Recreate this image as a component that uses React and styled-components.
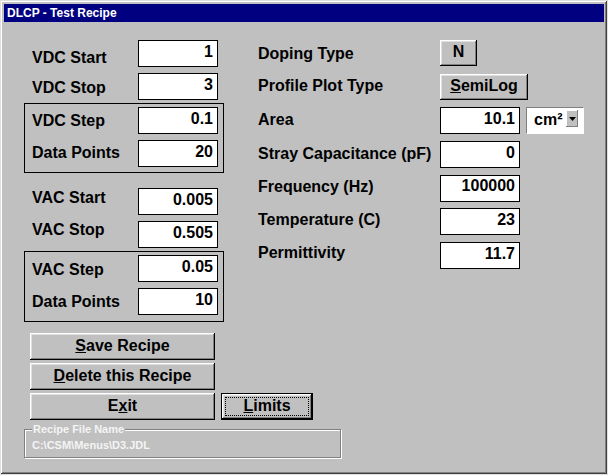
import React from "react";
import styled, { createGlobalStyle } from "styled-components";

const GlobalStyle = createGlobalStyle`
  html, body {
    margin: 0;
    padding: 0;
    background: #c0c0c0;
  }
  body {
    font-family: "Liberation Sans", Arial, sans-serif;
  }
`;

// left side values, dy = small nudge of the label against its box
const vdcTop = [
  { label: "VDC Start", value: "1", dy: 4, mt: 0 },
  { label: "VDC Stop", value: "3", dy: 1, mt: 6 },
];
const vdcGroup = [
  { label: "VDC Step", value: "0.1", dy: 0 },
  { label: "Data Points", value: "20", dy: -1 },
];
const vacTop = [
  { label: "VAC Start", value: "0.005", dy: -4, mt: 15 },
  { label: "VAC Stop", value: "0.505", dy: -5, mt: 6 },
];
const vacGroup = [
  { label: "VAC Step", value: "0.05", dy: 1 },
  { label: "Data Points", value: "10", dy: 0 },
];

const rightFields = [
  { label: "Stray Capacitance (pF)", value: "0", dy: -1 },
  { label: "Frequency (Hz)", value: "100000", dy: -1 },
  { label: "Temperature (C)", value: "23", dy: -2 },
  { label: "Permittivity", value: "11.7", dy: -3 },
];

const App = () => {
  return (
    <>
      <GlobalStyle />
      <Window>
        <TitleBar>DLCP - Test Recipe</TitleBar>
        <Body>
          <TopArea>
            <LeftCol>
              {vdcTop.map((f) => (
                <Field key={f.label} {...f} />
              ))}
              <Group $mt={3} $pb={5}>
                {vdcGroup.map((f) => (
                  <Field key={f.label} {...f} />
                ))}
              </Group>
              {vacTop.map((f) => (
                <Field key={f.label} {...f} />
              ))}
              <Group $mt={3} $pb={6}>
                {vacGroup.map((f) => (
                  <Field key={f.label} {...f} />
                ))}
              </Group>
            </LeftCol>

            <RightCol>
              <RightRow>
                <Label $w={182} $dy={0}>Doping Type</Label>
                <WinButton $w={37} $h={26}>N</WinButton>
              </RightRow>
              <RightRow>
                <Label $w={182} $dy={-1}>Profile Plot Type</Label>
                <WinButton $w={88} $h={26}>
                  <u>S</u>emiLog
                </WinButton>
              </RightRow>
              <RightRow>
                <Label $w={182} $dy={-1}>Area</Label>
                <NumBox readOnly value="10.1" />
                <UnitSelect>
                  <UnitText>cm²</UnitText>
                  <ArrowButton>
                    <svg width="7" height="4" viewBox="0 0 7 4">
                      <path d="M0 0h7L3.5 4z" fill="#000" />
                    </svg>
                  </ArrowButton>
                </UnitSelect>
              </RightRow>
              {rightFields.map((f) => (
                <RightRow key={f.label}>
                  <Label $w={182} $dy={f.dy}>{f.label}</Label>
                  <NumBox readOnly value={f.value} />
                </RightRow>
              ))}
            </RightCol>
          </TopArea>

          <ButtonStack>
            <WinButton $w={185}>
              <u>S</u>ave Recipe
            </WinButton>
            <WinButton $w={185}>
              <u>D</u>elete this Recipe
            </WinButton>
            <ButtonRow>
              <WinButton $w={185}>
                E<u>x</u>it
              </WinButton>
              <DefaultButton>
                <FocusRing>
                  <u>L</u>imits
                </FocusRing>
              </DefaultButton>
            </ButtonRow>
          </ButtonStack>

          <FileGroup>
            <FileLegend>Recipe File Name</FileLegend>
            <FilePath>C:\CSM\Menus\D3.JDL</FilePath>
          </FileGroup>
        </Body>
      </Window>
    </>
  );
};

const Field = ({ label, value, dy, mt }) => (
  <FieldRow $mt={mt}>
    <Label $w={106} $dy={dy}>{label}</Label>
    <NumBox readOnly value={value} />
  </FieldRow>
);

const Window = styled.div`
  width: 608px;
  height: 475px;
  box-sizing: border-box;
  padding: 4px;
  background: #c0c0c0;
  box-shadow: inset -1px -1px #dfdfdf, inset 1px 1px #dfdfdf,
    inset -2px -2px #404040, inset 2px 2px #fff, inset -3px -3px #808080;
  display: flex;
  flex-direction: column;
`;

const TitleBar = styled.div`
  height: 18px;
  background: #000080;
  color: #fff;
  font: bold 12px "Liberation Sans", Arial, sans-serif;
  display: flex;
  align-items: center;
  padding-left: 3px;
`;

const Body = styled.div`
  padding: 18px 0 0 20px;
  display: flex;
  flex-direction: column;
`;

const TopArea = styled.div`
  display: flex;
  gap: 34px;
`;

const LeftCol = styled.div`
  width: 200px;
  display: flex;
  flex-direction: column;
`;

const FieldRow = styled.div`
  display: flex;
  align-items: center;
  height: 27px;
  padding-left: 8px;
  margin-top: ${(p) => p.$mt || 0}px;
`;

const Group = styled.div`
  display: flex;
  flex-direction: column;
  gap: 6px;
  border: 1px solid #000;
  padding: 3px 0 ${(p) => p.$pb}px;
  margin-top: ${(p) => p.$mt}px;

  & > ${FieldRow} {
    padding-left: 7px;
  }
`;

const Label = styled.span`
  width: ${(p) => p.$w}px;
  flex-shrink: 0;
  font: bold 16px "Liberation Sans", Arial, sans-serif;
  color: #000;
  white-space: nowrap;
  ${(p) =>
    p.$dy > 0
      ? `margin-top: ${p.$dy * 2}px;`
      : p.$dy < 0
      ? `margin-bottom: ${-p.$dy * 2}px;`
      : ""}
`;

const NumBox = styled.input`
  width: 80px;
  height: 27px;
  box-sizing: border-box;
  margin: 0;
  border: 1px solid #000;
  border-radius: 0;
  background: #fff;
  padding: 0 4px 4px 4px;
  text-align: right;
  font: bold 16px "Liberation Sans", Arial, sans-serif;
  color: #000;
  outline: none;
`;

const RightCol = styled.div`
  display: flex;
  flex-direction: column;
  gap: 6.7px;
`;

const RightRow = styled.div`
  display: flex;
  align-items: center;
  height: 27px;
`;

const WinButton = styled.button`
  width: ${(p) => p.$w}px;
  height: ${(p) => p.$h || 27}px;
  align-self: flex-start;
  box-sizing: border-box;
  margin: 0;
  padding: 0 0 2px;
  border: none;
  border-radius: 0;
  background: #c0c0c0;
  box-shadow: inset -1px -1px #000, inset 1px 1px #fff,
    inset -2px -2px #808080, inset 2px 2px #dfdfdf;
  font: bold 16px "Liberation Sans", Arial, sans-serif;
  color: #000;
  display: flex;
  align-items: center;
  justify-content: center;
`;

const DefaultButton = styled.button`
  width: 92px;
  height: 27px;
  box-sizing: border-box;
  margin: 0;
  padding: 3px;
  border: 1px solid #000;
  border-radius: 0;
  background: #c0c0c0;
  box-shadow: inset -1px -1px #000, inset 1px 1px #fff,
    inset -2px -2px #808080, inset 2px 2px #dfdfdf;
  font: bold 16px "Liberation Sans", Arial, sans-serif;
  color: #000;
  display: flex;
`;

const FocusRing = styled.span`
  flex: 1;
  border: 1px dotted #000;
  display: flex;
  align-items: center;
  justify-content: center;
  padding-bottom: 1px;
`;

const UnitSelect = styled.div`
  width: 58px;
  height: 27px;
  box-sizing: border-box;
  margin-left: 6px;
  background: #fff;
  border: 1px solid;
  border-color: #808080 #fff #fff #808080;
  display: flex;
  align-items: flex-start;
  justify-content: space-between;
  padding: 1px 5px 0 7px;
`;

const UnitText = styled.span`
  font: bold 16px "Liberation Sans", Arial, sans-serif;
  color: #000;
  line-height: 22px;
`;

const ArrowButton = styled.span`
  width: 12px;
  height: 17px;
  margin-top: 1px;
  box-sizing: border-box;
  background: #c0c0c0;
  box-shadow: inset -1px -1px #808080, inset 1px 1px #fff;
  display: flex;
  align-items: center;
  justify-content: center;
`;

const ButtonStack = styled.div`
  display: flex;
  flex-direction: column;
  gap: 3px;
  margin-top: 11px;
  padding-left: 6px;
`;

const ButtonRow = styled.div`
  display: flex;
  gap: 6px;
`;

const FileGroup = styled.fieldset`
  width: 317px;
  box-sizing: border-box;
  margin: 3px 0 0;
  padding: 4px 7px 6px;
  border: 1px solid #808080;
  box-shadow: 1px 1px 0 #fff, inset 1px 1px 0 #fff;
`;

const FileLegend = styled.legend`
  padding: 0 1px;
  background: #c0c0c0;
  font: bold 11px "Liberation Sans", Arial, sans-serif;
  color: #f4f4f4;
`;

const FilePath = styled.div`
  font: bold 11px "Liberation Sans", Arial, sans-serif;
  color: #f4f4f4;
`;

export default App;
